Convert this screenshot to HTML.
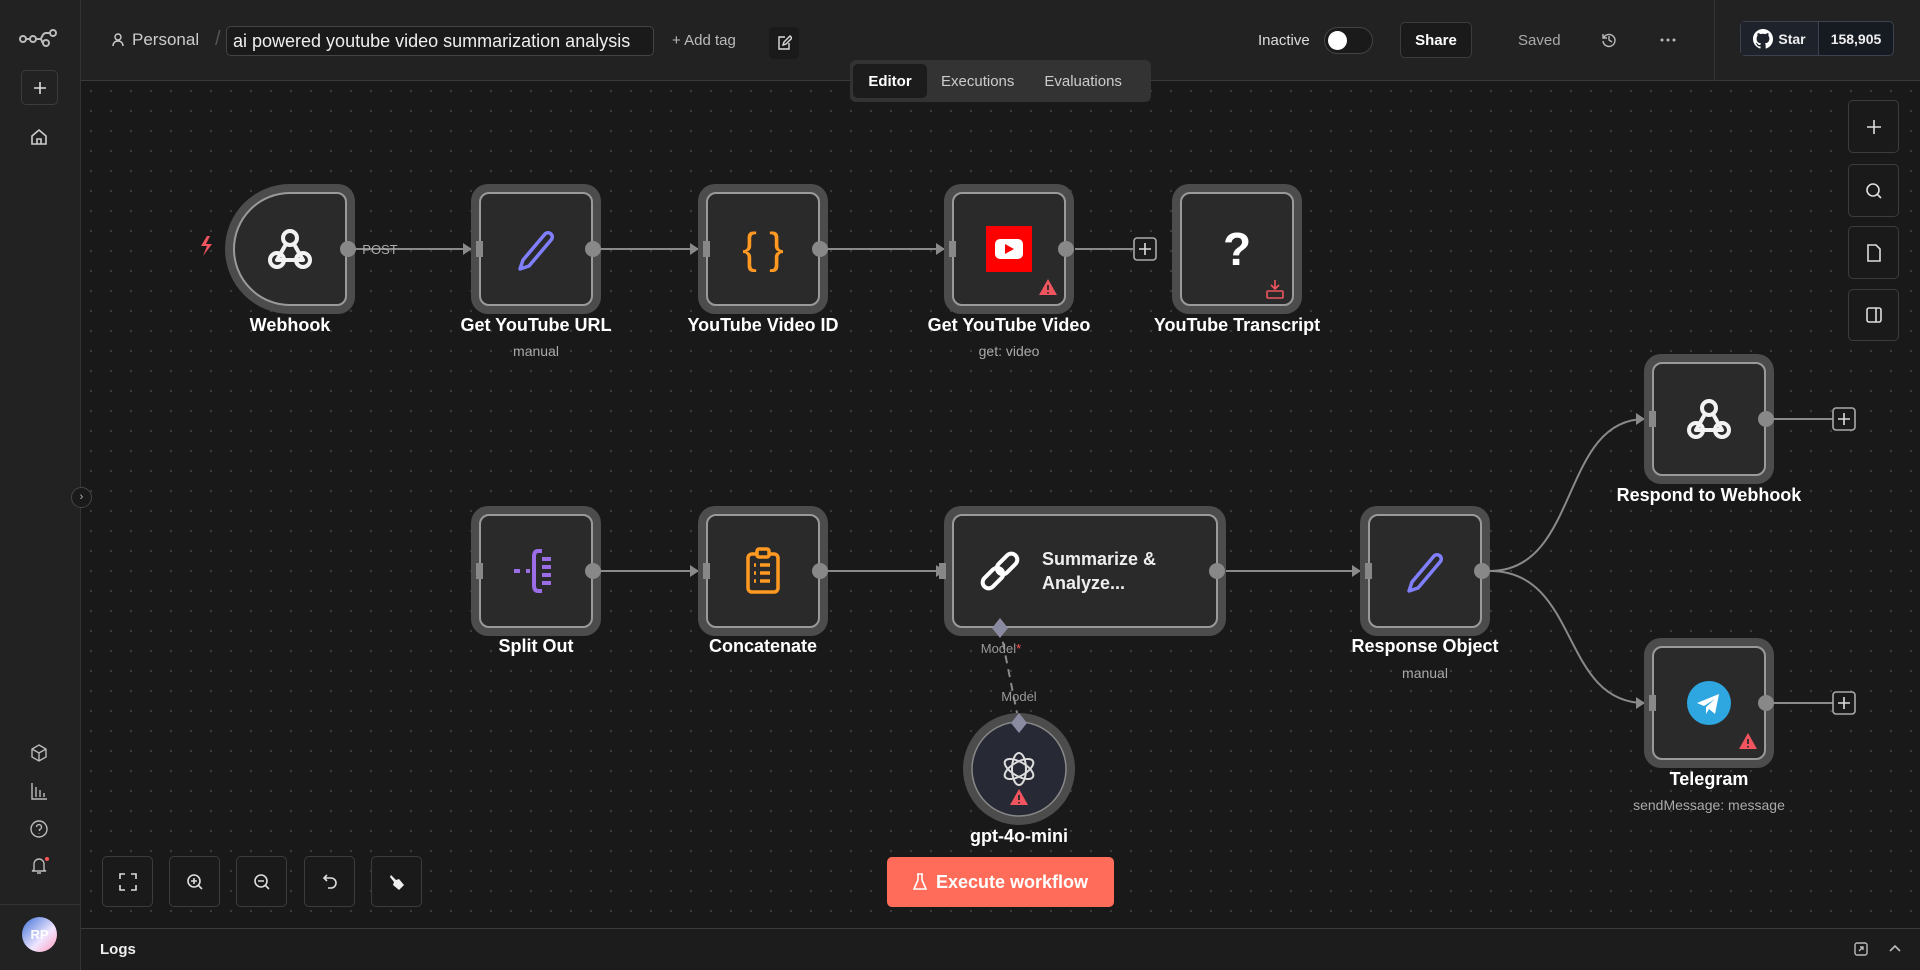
<!DOCTYPE html>
<html><head><meta charset="utf-8"><style>
*{box-sizing:border-box;margin:0;padding:0}
body{width:1920px;height:970px;overflow:hidden;background:#1a1a1a;font-family:"Liberation Sans",sans-serif;color:#e6e6e6;position:relative}
.abs{position:absolute}
#side{left:0;top:0;width:81px;height:970px;background:#222;border-right:1px solid #333}
#head{left:81px;top:0;width:1839px;height:81px;background:#222;border-bottom:1px solid #3a3a3a}
#canvas{left:81px;top:81px;width:1839px;height:847px;background-color:#191919;background-image:radial-gradient(#3c3c3c 1px,transparent 1.3px);background-size:20px 20px}
.btn{border:1px solid #3c3c3c;border-radius:5px;background:#1c1c1c;display:flex;align-items:center;justify-content:center}
#logs{left:81px;top:928px;width:1839px;height:42px;background:#1c1c1c;border-top:1px solid #3a3a3a}
</style></head><body>
<div id="canvas" class="abs"></div>
<div id="side" class="abs">
 <svg class="abs" style="left:19px;top:28px" width="40" height="20" viewBox="0 0 40 20" fill="none" stroke="#bbb" stroke-width="2"><circle cx="4" cy="11" r="3"/><circle cx="14" cy="11" r="3"/><circle cx="27" cy="15" r="3"/><circle cx="34" cy="5" r="3"/><path d="M7 11h4M17 11h4c2 0 2-6 6-6h4M21 11c2 0 2 4 3 4"/></svg>
 <div class="abs btn" style="left:21px;top:70px;width:37px;height:35px;background:#222"><svg width="16" height="16" stroke="#ddd" stroke-width="1.6"><path d="M8 2v12M2 8h12"/></svg></div>
 <svg class="abs" style="left:30px;top:128px" width="18" height="18" fill="none" stroke="#ccc" stroke-width="1.6"><path d="M2 8L9 2l7 6v8H2z M7 16v-5h4v5"/></svg>
 <svg class="abs" style="left:30px;top:744px" width="18" height="18" fill="none" stroke="#bbb" stroke-width="1.4"><path d="M9 1l7 4v8l-7 4-7-4V5z M2 5l7 4 7-4 M9 9v8"/></svg>
 <svg class="abs" style="left:30px;top:782px" width="18" height="18" fill="none" stroke="#bbb" stroke-width="1.4"><path d="M2 1v16h15 M6 15V5 M10 15V8 M14 15v-4"/></svg>
 <svg class="abs" style="left:30px;top:820px" width="18" height="18" fill="none" stroke="#bbb" stroke-width="1.4"><circle cx="9" cy="9" r="8"/><path d="M6.5 7a2.5 2.5 0 1 1 3 2.5V11 M9 13.5v.5"/></svg>
 <svg class="abs" style="left:30px;top:856px" width="20" height="20" fill="none" stroke="#bbb" stroke-width="1.4"><path d="M4 14V8a5 5 0 0 1 10 0v6l2 1H2z M7 17h4"/><circle cx="17" cy="3" r="2" fill="#f55" stroke="none"/></svg>
 <div class="abs" style="left:0;top:904px;width:81px;border-top:1px solid #333"></div>
 <div class="abs" style="left:22px;top:917px;width:35px;height:35px;border-radius:50%;background:linear-gradient(135deg,#3b6fd6,#f0e6ff 60%,#f9b);display:flex;align-items:center;justify-content:center;font-size:13px;color:#fff;font-weight:bold">RP</div>
</div>
<div class="abs" style="left:71px;top:487px;width:21px;height:21px;border-radius:50%;background:#1a1a1a;border:1px solid #444;font-size:11px;color:#bbb;text-align:center;line-height:18px">›</div>
<div id="head" class="abs">
 <svg class="abs" style="left:30px;top:33px" width="14" height="14" fill="none" stroke="#ccc" stroke-width="1.4"><circle cx="7" cy="4" r="3"/><path d="M2 13c0-3 2-5 5-5s5 2 5 5"/></svg>
 <div class="abs" style="left:51px;top:30px;font-size:17px;color:#ccc">Personal</div>
 <div class="abs" style="left:134px;top:28px;font-size:20px;color:#555">/</div>
 <div class="abs" style="left:145px;top:26px;width:428px;height:30px;border:1px solid #444;border-radius:5px;background:#1a1a1a;font-size:18px;color:#eee;padding:4px 6px;white-space:nowrap">ai powered youtube video summarization analysis</div>
 <div class="abs" style="left:591px;top:32px;font-size:15px;color:#bbb">+ Add tag</div>
 <div class="abs" style="left:688px;top:27px;width:30px;height:32px;border-radius:5px;background:#1a1a1a;display:flex;align-items:center;justify-content:center"><svg width="16" height="16" fill="none" stroke="#ddd" stroke-width="1.4"><path d="M9 2H3v12h10V8 M7 10l1-3 6-6 2 2-6 6z"/></svg></div>
 <div class="abs" style="left:1177px;top:32px;font-size:15px;color:#ddd">Inactive</div>
 <div class="abs" style="left:1243px;top:27px;width:49px;height:27px;border-radius:14px;background:#1a1a1a;border:1px solid #444"><div style="position:absolute;left:3px;top:3px;width:19px;height:19px;border-radius:50%;background:#fff"></div></div>
 <div class="btn abs" style="left:1319px;top:22px;width:72px;height:36px;font-size:15px;color:#fff;font-weight:bold;background:#1a1a1a">Share</div>
 <div class="abs" style="left:1437px;top:32px;font-size:15px;color:#aaa">Saved</div>
 <svg class="abs" style="left:1519px;top:31px" width="17" height="17" fill="none" stroke="#bbb" stroke-width="1.4"><path d="M3 3v4h4 M3.5 7A6 6 0 1 1 3 10 M9 5v4l3 2"/></svg>
 <svg class="abs" style="left:1579px;top:38px" width="16" height="4" fill="#bbb"><circle cx="2" cy="2" r="1.5"/><circle cx="8" cy="2" r="1.5"/><circle cx="14" cy="2" r="1.5"/></svg>
 <div class="abs" style="left:1633px;top:0;height:81px;border-left:1px solid #333"></div>
 <div class="abs" style="left:1659px;top:21px;width:154px;height:35px;border:1px solid #3c4250;border-radius:5px;background:#161b22;display:flex;font-size:14px;font-weight:bold;color:#eee">
  <div style="width:78px;display:flex;align-items:center;justify-content:center;gap:5px;border-right:1px solid #3c4250;background:#1e232b"><svg width="20" height="20" viewBox="0 0 16 16" fill="#fff"><path d="M8 0C3.6 0 0 3.6 0 8c0 3.5 2.3 6.5 5.5 7.6.4.1.5-.2.5-.4v-1.4c-2.2.5-2.7-1-2.7-1-.4-.9-.9-1.2-.9-1.2-.7-.5.1-.5.1-.5.8.1 1.2.8 1.2.8.7 1.2 1.9.9 2.3.7.1-.5.3-.9.5-1.1-1.8-.2-3.6-.9-3.6-4 0-.9.3-1.6.8-2.1-.1-.2-.4-1 .1-2.1 0 0 .7-.2 2.2.8a7.600 7.600 0 0 1 4 0c1.5-1 2.2-.8 2.2-.8.4 1.1.2 1.900.1 2.100.5.6.8 1.300.8 2.100 0 3.100-1.900 3.800-3.600 4 .3.3.6.8.6 1.500v2.200c0 .2.1.5.6.4A8 8 0 0 0 16 8c0-4.4-3.6-8-8-8z"/></svg>Star</div>
  <div style="flex:1;display:flex;align-items:center;justify-content:center">158,905</div>
 </div>
</div>
<div class="abs" style="left:850px;top:60px;width:301px;height:42px;background:#333;border-radius:6px;display:flex;align-items:center;padding-left:3px;font-size:15px;color:#ccc">
 <div style="width:74px;height:34px;background:#1c1c1c;border-radius:5px;display:flex;align-items:center;justify-content:center;color:#fff;font-weight:bold">Editor</div>
 <div style="margin-left:14px">Executions</div><div style="margin-left:30px">Evaluations</div>
</div>
<div class="btn abs" style="left:1848px;top:100px;width:51px;height:53px;background:#1a1a1a"><svg width="18" height="18" stroke="#ddd" stroke-width="1.6"><path d="M9 2v14M2 9h14"/></svg></div>
<div class="btn abs" style="left:1848px;top:164px;width:51px;height:53px;background:#1a1a1a"><svg width="18" height="18" fill="none" stroke="#ddd" stroke-width="1.6"><circle cx="8" cy="8" r="6"/><path d="M12.5 12.5L16 16"/></svg></div>
<div class="btn abs" style="left:1848px;top:226px;width:51px;height:53px;background:#1a1a1a"><svg width="18" height="18" fill="none" stroke="#ddd" stroke-width="1.6"><path d="M3 1h8l4 4v12H3z"/></svg></div>
<div class="btn abs" style="left:1848px;top:289px;width:51px;height:52px;background:#1a1a1a"><svg width="18" height="18" fill="none" stroke="#ddd" stroke-width="1.6"><rect x="2" y="2" width="14" height="14" rx="2"/><path d="M11 2v14"/></svg></div>
<div class="btn abs" style="left:102px;top:856px;width:51px;height:51px;background:#1a1a1a"><svg width="18" height="18" fill="none" stroke="#ddd" stroke-width="1.6"><path d="M1 6V1h5M12 1h5v5M17 12v5h-5M6 17H1v-5"/></svg></div>
<div class="btn abs" style="left:169px;top:856px;width:51px;height:51px;background:#1a1a1a"><svg width="18" height="18" fill="none" stroke="#ddd" stroke-width="1.6"><circle cx="8" cy="8" r="6"/><path d="M12.5 12.5L16 16M8 5v6M5 8h6"/></svg></div>
<div class="btn abs" style="left:236px;top:856px;width:51px;height:51px;background:#1a1a1a"><svg width="18" height="18" fill="none" stroke="#ddd" stroke-width="1.6"><circle cx="8" cy="8" r="6"/><path d="M12.5 12.5L16 16M5 8h6"/></svg></div>
<div class="btn abs" style="left:304px;top:856px;width:51px;height:51px;background:#1a1a1a"><svg width="18" height="18" fill="none" stroke="#ddd" stroke-width="1.6"><path d="M6 2L3 5l3 3M3 5h7a5 5 0 0 1 0 10H7"/></svg></div>
<div class="btn abs" style="left:371px;top:856px;width:51px;height:51px;background:#1a1a1a"><svg width="18" height="18" fill="#eee"><path d="M3 2l5 5 3-1 5 6-5 5-6-5 1-3-4-5z"/></svg></div>
<div class="abs" style="left:887px;top:857px;width:227px;height:50px;background:#ff6d5a;border-radius:5px;display:flex;align-items:center;justify-content:center;gap:9px;font-size:18px;color:#fff;font-weight:bold"><svg width="14" height="18" fill="none" stroke="#fff" stroke-width="1.6"><path d="M4 1h6M5 1v6L1 16h12L9 7V1"/></svg>Execute workflow</div>
<div id="logs" class="abs"><div class="abs" style="left:19px;top:12px;font-size:15px;font-weight:bold;color:#eee">Logs</div>
<svg class="abs" style="left:1772px;top:12px" width="16" height="16" fill="none" stroke="#bbb" stroke-width="1.4"><rect x="2" y="2" width="12" height="12" rx="2"/><path d="M6 10l4-4M7 6h3v3"/></svg>
<svg class="abs" style="left:1806px;top:12px" width="16" height="16" fill="none" stroke="#bbb" stroke-width="1.6"><path d="M3 10l5-5 5 5"/></svg></div>

<svg class="abs" style="left:0;top:0" width="1920" height="970" font-family="Liberation Sans, sans-serif">
<defs>
<g id="nodebox"><rect x="-65" y="-65" width="130" height="130" rx="17" fill="#4c4c4c"/><rect x="-56" y="-56" width="112" height="112" rx="9" fill="#2a2a2a" stroke="#9a9a9a" stroke-width="2"/></g>
<g id="inh"><rect x="-3" y="-8" width="7" height="16" fill="#888"/></g>
<g id="plus"><rect x="-11" y="-11" width="22" height="22" rx="3" fill="#1a1a1a" stroke="#aaa" stroke-width="1.6"/><path d="M0 -6v12M-6 0h12" stroke="#ddd" stroke-width="1.6"/></g>
<g id="warn"><path d="M0 -9L9 7H-9z" fill="#f0555f"/><path d="M0 -3v5M0 4v1.5" stroke="#2a2a2a" stroke-width="1.8"/></g>
<g id="hook" fill="none" stroke="#f2f2f2" stroke-width="4" stroke-linecap="round">
 <circle cx="0" cy="-11" r="7"/><circle cx="-13" cy="11" r="7"/><circle cx="13" cy="11" r="7"/>
 <path d="M-4 -5l-9 16M4 -5l9 16M-13 11h26"/>
</g>
<g id="pen"><path d="M-16 20l3 -9 22 -26a4 4 0 0 1 6 6l-22 26z" fill="none" stroke="#8080ff" stroke-width="3.5" stroke-linejoin="round"/></g>
</defs>
<g stroke="#8a8a8a" stroke-width="2" fill="none">
<path d="M356 249H472M601 249H699M828 249H945M1075 249H1133"/>
<path d="M601 571H699M828 571H945M1226 571H1361"/>
<path d="M1490 571C1580 571 1560 419 1645 419M1490 571C1580 571 1560 703 1645 703"/>
<path d="M1774 419H1833M1774 703H1833"/>
<path d="M1000 628L1019 723" stroke-dasharray="8 6"/>
</g>
<g fill="#8a8a8a"><path d="M463 243l9 6-9 6zM690 243l9 6-9 6zM936 243l9 6-9 6zM690 565l9 6-9 6zM936 565l9 6-9 6zM1352 565l9 6-9 6zM1636 413l9 6-9 6zM1636 697l9 6-9 6z"/></g>
<g transform="translate(290,249)">
<path d="M-65 0A65 65 0 0 1 0 -65H48a17 17 0 0 1 17 17V48a17 17 0 0 1 -17 17H0A65 65 0 0 1 -65 0z" fill="#4c4c4c"/>
<path d="M-56 0A56 56 0 0 1 0 -56H47a9 9 0 0 1 9 9V47a9 9 0 0 1 -9 9H0A56 56 0 0 1 -56 0z" fill="#2a2a2a" stroke="#9a9a9a" stroke-width="2"/>
<use href="#hook"/><circle cx="58" cy="0" r="8" fill="#888"/>
<path d="M-83 -13l-6 10h6l-4 10 9-12h-6l4-8z" fill="#f0555f"/>
</g>
<text x="380" y="254" font-size="13" fill="#aaa" text-anchor="middle">POST</text>
<g transform="translate(536,249)"><use href="#nodebox"/><use href="#inh" x="-57"/><circle cx="57" r="8" fill="#888"/><use href="#pen"/></g>
<g transform="translate(763,249)"><use href="#nodebox"/><use href="#inh" x="-57"/><circle cx="57" r="8" fill="#888"/><text y="14" font-size="44" fill="#ff9922" text-anchor="middle">{ }</text></g>
<g transform="translate(1009,249)"><use href="#nodebox"/><use href="#inh" x="-57"/><circle cx="57" r="8" fill="#888"/><rect x="-23" y="-23" width="46" height="46" fill="#f00"/><rect x="-14" y="-10" width="28" height="20" rx="5" fill="#fff"/><path d="M-4 -5l9 5-9 5z" fill="#f00"/><use href="#warn" x="39" y="39"/></g>
<use href="#plus" x="1145" y="249"/>
<g transform="translate(1237,249)"><use href="#nodebox"/><text y="16" font-size="46" font-weight="bold" fill="#fff" text-anchor="middle">?</text><g stroke="#f0555f" stroke-width="1.6" fill="none"><path d="M38 31v9M34 36l4 4 4-4"/><rect x="30" y="42" width="16" height="7" rx="1"/></g></g>
<g transform="translate(536,571)"><use href="#nodebox"/><use href="#inh" x="-57"/><circle cx="57" r="8" fill="#888"/><g stroke="#9b6ee8" stroke-width="4" fill="none"><path d="M-22 0h6M-10 0h4M6 -20h-4q-4 0 -4 6v28q0 6 4 6h4"/><path d="M6 -12h9M6 -4h9M6 4h9M6 12h9"/></g></g>
<g transform="translate(763,571)"><use href="#nodebox"/><use href="#inh" x="-57"/><circle cx="57" r="8" fill="#888"/><g stroke="#ff9922" stroke-width="3.5" fill="none"><rect x="-15" y="-17" width="30" height="38" rx="4"/><rect x="-6" y="-22" width="12" height="8" rx="2" fill="#2a2a2a"/><path d="M-9 -6h2M-3 -6h10M-9 2h2M-3 2h10M-9 10h2M-3 10h10"/></g></g>
<g transform="translate(944,506)"><rect x="0" y="0" width="282" height="130" rx="17" fill="#4c4c4c"/><rect x="9" y="9" width="264" height="112" rx="9" fill="#2a2a2a" stroke="#9a9a9a" stroke-width="2"/><rect x="-5" y="57" width="7" height="16" fill="#888"/><circle cx="273" cy="65" r="8" fill="#888"/>
<g fill="none" stroke="#fff" stroke-width="4" stroke-linecap="round" transform="translate(56,65) rotate(-45)"><rect x="-22" y="-6" width="24" height="12" rx="6"/><rect x="-2" y="-6" width="24" height="12" rx="6"/></g>
<text x="98" y="59" font-size="18" font-weight="bold" fill="#eee">Summarize &amp;</text><text x="98" y="83" font-size="18" font-weight="bold" fill="#eee">Analyze...</text></g>
<path d="M1000 618l8 10-8 10-8-10z" fill="#8a8aa0"/>
<text x="1001" y="653" font-size="13" fill="#999" text-anchor="middle">Model<tspan fill="#f55">*</tspan></text>
<g transform="translate(1425,571)"><use href="#nodebox"/><use href="#inh" x="-57"/><circle cx="57" r="8" fill="#888"/><use href="#pen"/></g>
<g transform="translate(1709,419)"><use href="#nodebox"/><use href="#inh" x="-57"/><circle cx="57" r="8" fill="#888"/><use href="#hook"/></g>
<use href="#plus" x="1844" y="419"/>
<g transform="translate(1709,703)"><use href="#nodebox"/><use href="#inh" x="-57"/><circle cx="57" r="8" fill="#888"/><circle r="22" fill="#2ea6df"/><path d="M-12 0l22-9-4 20-6-5-3 5v-7l9-8-11 7z" fill="#fff"/><use href="#warn" x="39" y="39"/></g>
<use href="#plus" x="1844" y="703"/>
<g transform="translate(1019,769)"><circle r="56" fill="#4c4c4c"/><circle r="47" fill="#272935" stroke="#888" stroke-width="1.5"/>
<g fill="none" stroke="#ddd" stroke-width="2"><ellipse rx="7" ry="16"/><ellipse rx="7" ry="16" transform="rotate(60)"/><ellipse rx="7" ry="16" transform="rotate(120)"/></g>
<use href="#warn" y="29"/></g>
<path d="M1019 713l8 10-8 10-8-10z" fill="#8a8aa0"/>
<text x="1019" y="701" font-size="13" fill="#999" text-anchor="middle">Model</text>
<g font-size="18" font-weight="bold" fill="#fff" text-anchor="middle">
<text x="290" y="331">Webhook</text><text x="536" y="331">Get YouTube URL</text><text x="763" y="331">YouTube Video ID</text><text x="1009" y="331">Get YouTube Video</text><text x="1237" y="331">YouTube Transcript</text>
<text x="536" y="652">Split Out</text><text x="763" y="652">Concatenate</text><text x="1425" y="652">Response Object</text>
<text x="1709" y="501">Respond to Webhook</text><text x="1709" y="785">Telegram</text><text x="1019" y="842">gpt-4o-mini</text></g>
<g font-size="14" fill="#aaa" text-anchor="middle"><text x="536" y="356">manual</text><text x="1009" y="356">get: video</text><text x="1425" y="678">manual</text><text x="1709" y="810">sendMessage: message</text></g>
</svg>
</body></html>
